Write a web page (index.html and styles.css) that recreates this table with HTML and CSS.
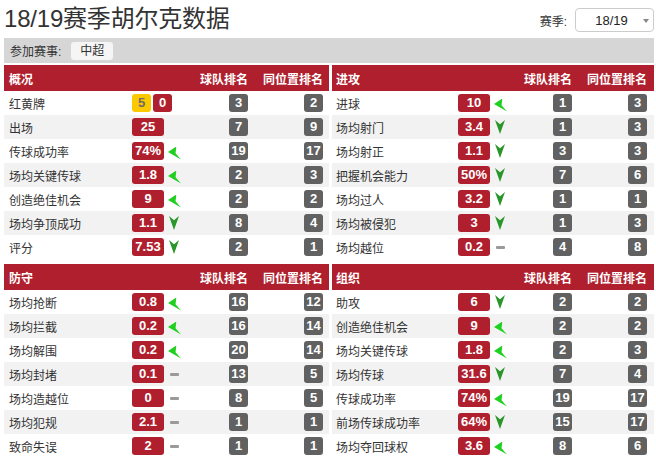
FILE: index.html
```html
<!DOCTYPE html>
<html lang="zh">
<head>
<meta charset="utf-8">
<title>18/19赛季胡尔克数据</title>
<link rel="stylesheet" href="styles.css">
</head>
<body>
<div class="page">
  <div class="topbar">
    <h1 class="title">18/19赛季胡尔克数据</h1>
    <div class="season">
      <span class="season-label">赛季:</span>
      <div class="select"><span class="select-text">18/19</span><span class="caret"></span></div>
    </div>
  </div>
  <div class="filter">
    <span class="filter-label">参加赛事:</span>
    <span class="chip">中超</span>
  </div>

  <div class="panels">
    <section class="panel left">
      <div class="row head"><span class="c-name">概况</span><span class="c-val"></span><span class="c-rank">球队排名</span><span class="c-pos">同位置排名</span></div>
      <div class="row"><span class="c-name">红黄牌</span><span class="c-val"><b class="badge card yellow">5</b><b class="badge card">0</b></span><span class="c-rank"><b class="rk">3</b></span><span class="c-pos"><b class="rk">2</b></span></div>
      <div class="row"><span class="c-name">出场</span><span class="c-val"><b class="badge">25</b></span><span class="c-rank"><b class="rk">7</b></span><span class="c-pos"><b class="rk">9</b></span></div>
      <div class="row"><span class="c-name">传球成功率</span><span class="c-val"><b class="badge">74%</b><i class="tr up"></i></span><span class="c-rank"><b class="rk">19</b></span><span class="c-pos"><b class="rk">17</b></span></div>
      <div class="row"><span class="c-name">场均关键传球</span><span class="c-val"><b class="badge">1.8</b><i class="tr up"></i></span><span class="c-rank"><b class="rk">2</b></span><span class="c-pos"><b class="rk">3</b></span></div>
      <div class="row"><span class="c-name">创造绝佳机会</span><span class="c-val"><b class="badge">9</b><i class="tr up"></i></span><span class="c-rank"><b class="rk">2</b></span><span class="c-pos"><b class="rk">2</b></span></div>
      <div class="row"><span class="c-name">场均争顶成功</span><span class="c-val"><b class="badge">1.1</b><i class="tr down"></i></span><span class="c-rank"><b class="rk">8</b></span><span class="c-pos"><b class="rk">4</b></span></div>
      <div class="row"><span class="c-name">评分</span><span class="c-val"><b class="badge">7.53</b><i class="tr down"></i></span><span class="c-rank"><b class="rk">2</b></span><span class="c-pos"><b class="rk">1</b></span></div>
    </section>

    <section class="panel right">
      <div class="row head"><span class="c-name">进攻</span><span class="c-val"></span><span class="c-rank">球队排名</span><span class="c-pos">同位置排名</span></div>
      <div class="row"><span class="c-name">进球</span><span class="c-val"><b class="badge">10</b><i class="tr up"></i></span><span class="c-rank"><b class="rk">1</b></span><span class="c-pos"><b class="rk">3</b></span></div>
      <div class="row"><span class="c-name">场均射门</span><span class="c-val"><b class="badge">3.4</b><i class="tr down"></i></span><span class="c-rank"><b class="rk">1</b></span><span class="c-pos"><b class="rk">3</b></span></div>
      <div class="row"><span class="c-name">场均射正</span><span class="c-val"><b class="badge">1.1</b><i class="tr down"></i></span><span class="c-rank"><b class="rk">3</b></span><span class="c-pos"><b class="rk">3</b></span></div>
      <div class="row"><span class="c-name">把握机会能力</span><span class="c-val"><b class="badge">50%</b><i class="tr down"></i></span><span class="c-rank"><b class="rk">7</b></span><span class="c-pos"><b class="rk">6</b></span></div>
      <div class="row"><span class="c-name">场均过人</span><span class="c-val"><b class="badge">3.2</b><i class="tr down"></i></span><span class="c-rank"><b class="rk">1</b></span><span class="c-pos"><b class="rk">1</b></span></div>
      <div class="row"><span class="c-name">场均被侵犯</span><span class="c-val"><b class="badge">3</b><i class="tr down"></i></span><span class="c-rank"><b class="rk">1</b></span><span class="c-pos"><b class="rk">3</b></span></div>
      <div class="row"><span class="c-name">场均越位</span><span class="c-val"><b class="badge">0.2</b><i class="tr flat"></i></span><span class="c-rank"><b class="rk">4</b></span><span class="c-pos"><b class="rk">8</b></span></div>
    </section>

    <section class="panel left">
      <div class="row head"><span class="c-name">防守</span><span class="c-val"></span><span class="c-rank">球队排名</span><span class="c-pos">同位置排名</span></div>
      <div class="row"><span class="c-name">场均抢断</span><span class="c-val"><b class="badge">0.8</b><i class="tr up"></i></span><span class="c-rank"><b class="rk">16</b></span><span class="c-pos"><b class="rk">12</b></span></div>
      <div class="row"><span class="c-name">场均拦截</span><span class="c-val"><b class="badge">0.2</b><i class="tr up"></i></span><span class="c-rank"><b class="rk">16</b></span><span class="c-pos"><b class="rk">14</b></span></div>
      <div class="row"><span class="c-name">场均解围</span><span class="c-val"><b class="badge">0.2</b><i class="tr up"></i></span><span class="c-rank"><b class="rk">20</b></span><span class="c-pos"><b class="rk">14</b></span></div>
      <div class="row"><span class="c-name">场均封堵</span><span class="c-val"><b class="badge">0.1</b><i class="tr flat"></i></span><span class="c-rank"><b class="rk">13</b></span><span class="c-pos"><b class="rk">5</b></span></div>
      <div class="row"><span class="c-name">场均造越位</span><span class="c-val"><b class="badge">0</b><i class="tr flat"></i></span><span class="c-rank"><b class="rk">8</b></span><span class="c-pos"><b class="rk">5</b></span></div>
      <div class="row"><span class="c-name">场均犯规</span><span class="c-val"><b class="badge">2.1</b><i class="tr flat"></i></span><span class="c-rank"><b class="rk">1</b></span><span class="c-pos"><b class="rk">1</b></span></div>
      <div class="row"><span class="c-name">致命失误</span><span class="c-val"><b class="badge">2</b><i class="tr flat"></i></span><span class="c-rank"><b class="rk">1</b></span><span class="c-pos"><b class="rk">1</b></span></div>
    </section>

    <section class="panel right">
      <div class="row head"><span class="c-name">组织</span><span class="c-val"></span><span class="c-rank">球队排名</span><span class="c-pos">同位置排名</span></div>
      <div class="row"><span class="c-name">助攻</span><span class="c-val"><b class="badge">6</b><i class="tr down"></i></span><span class="c-rank"><b class="rk">2</b></span><span class="c-pos"><b class="rk">2</b></span></div>
      <div class="row"><span class="c-name">创造绝佳机会</span><span class="c-val"><b class="badge">9</b><i class="tr up"></i></span><span class="c-rank"><b class="rk">2</b></span><span class="c-pos"><b class="rk">2</b></span></div>
      <div class="row"><span class="c-name">场均关键传球</span><span class="c-val"><b class="badge">1.8</b><i class="tr up"></i></span><span class="c-rank"><b class="rk">2</b></span><span class="c-pos"><b class="rk">3</b></span></div>
      <div class="row"><span class="c-name">场均传球</span><span class="c-val"><b class="badge">31.6</b><i class="tr down"></i></span><span class="c-rank"><b class="rk">7</b></span><span class="c-pos"><b class="rk">4</b></span></div>
      <div class="row"><span class="c-name">传球成功率</span><span class="c-val"><b class="badge">74%</b><i class="tr up"></i></span><span class="c-rank"><b class="rk">19</b></span><span class="c-pos"><b class="rk">17</b></span></div>
      <div class="row"><span class="c-name">前场传球成功率</span><span class="c-val"><b class="badge">64%</b><i class="tr down"></i></span><span class="c-rank"><b class="rk">15</b></span><span class="c-pos"><b class="rk">17</b></span></div>
      <div class="row"><span class="c-name">场均夺回球权</span><span class="c-val"><b class="badge">3.6</b><i class="tr up"></i></span><span class="c-rank"><b class="rk">8</b></span><span class="c-pos"><b class="rk">6</b></span></div>
    </section>
  </div>
</div>
</body>
</html>
```
FILE: styles.css
```css
* { box-sizing: border-box; }
html, body { margin: 0; padding: 0; background: #fff; }
body {
  font-family: "Liberation Sans", "Noto Sans CJK SC", sans-serif;
  color: #333;
  font-size: 12px;
}
.page { width: 650px; margin-left: 4px; }

.topbar {
  height: 38px;
  display: flex;
  align-items: center;
  justify-content: space-between;
}
.title {
  margin: 0;
  font-size: 24px;
  font-weight: normal;
  line-height: 38px;
  color: #333;
  letter-spacing: -0.2px;
}
.season { display: flex; align-items: center; gap: 8px; padding-top: 2px; }
.season-label { font-size: 12px; color: #333; }
.select {
  width: 79px;
  height: 24px;
  border: 1px solid #ccc;
  border-radius: 4px;
  display: flex;
  align-items: center;
  justify-content: center;
  position: relative;
  font-size: 13px;
  color: #222;
}
.select-text { margin-left: -6px; }
.caret {
  position: absolute;
  right: 4px;
  top: 10px;
  width: 0; height: 0;
  border-left: 3.5px solid transparent;
  border-right: 3.5px solid transparent;
  border-top: 4px solid #888;
}

.filter {
  height: 25px;
  background: #d6d6d6;
  display: flex;
  align-items: center;
  padding-left: 6px;
  gap: 10px;
  margin-bottom: 2px;
}
.filter-label { font-size: 12px; color: #333; }
.chip {
  background: #f5f5f5;
  border-radius: 3px;
  width: 42px;
  height: 18px;
  line-height: 18px;
  text-align: center;
  font-size: 12px;
  color: #333;
}

.panels {
  display: grid;
  grid-template-columns: 325px 322px;
  column-gap: 3px;
  row-gap: 5px;
}
.panel .row {
  display: grid;
  height: 24px;
  align-items: center;
}
.panel.left .row { grid-template-columns: 128px 66px 56px 75px; }
.panel.right .row { grid-template-columns: 126px 66px 54px 76px; }
.panel .row:nth-child(odd) { background: #f2f2f2; }
.panel .row:nth-child(even) { background: #fff; }
.panel .row.head {
  background: #b01f2d;
  height: 26px;
  color: #fff;
  font-weight: bold;
}
.c-name { padding-left: 5px; white-space: nowrap; }
.panel.right .c-name { padding-left: 4px; }
.c-val { display: flex; align-items: center; gap: 4px; }
.c-rank, .c-pos { text-align: right; padding-right: 6px; white-space: nowrap; }
.panel.right .c-pos { padding-right: 7px; }

.badge {
  display: inline-block;
  width: 32px;
  height: 18px;
  line-height: 18px;
  border-radius: 3px;
  background: #b01f2d;
  color: #fff;
  font-weight: bold;
  font-size: 13px;
  text-align: center;
}
.badge.card { width: 19px; }
.badge.card + .badge.card { margin-left: -2px; }
.badge.yellow { background: #fcc800; color: #6d6d6d; }

.rk {
  display: inline-block;
  width: 19px;
  height: 18px;
  line-height: 18px;
  border-radius: 3px;
  background: #616161;
  color: #fff;
  font-weight: bold;
  font-size: 13px;
  text-align: center;
  vertical-align: middle;
}

.tr { display: inline-block; }
.tr.down {
  width: 10px;
  height: 14px;
  margin-left: 1px;
  background: #2a962a;
  clip-path: polygon(0 0, 50% 30%, 100% 0, 50% 100%);
}
.tr.up {
  width: 13px;
  height: 13px;
  margin-left: 0;
  margin-top: 4px;
  background: #1fd01f;
  clip-path: polygon(0 42%, 64% 0, 58% 52%, 100% 100%);
}
.tr.flat {
  width: 9px;
  height: 3px;
  margin-left: 2px;
  border-radius: 1px;
  background: #9a9a9a;
}
```
